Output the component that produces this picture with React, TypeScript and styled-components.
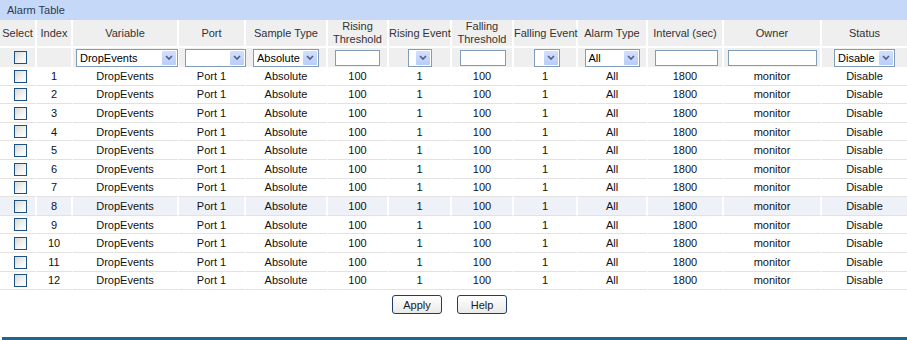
import React from 'react';
import styled, { createGlobalStyle } from 'styled-components';

const GlobalStyle = createGlobalStyle`
  body {
    margin: 0;
    background: #fff;
    font-family: 'Liberation Sans', Arial, sans-serif;
    font-size: 11px;
  }
`;

const Page = styled.div`
  width: 907px;
  height: 340px;
  display: flex;
  flex-direction: column;
`;

const TitleBar = styled.div`
  height: 20px;
  line-height: 20px;
  padding-left: 7px;
  background: #c6d8f8;
  color: #2d3b52;
  font-size: 11px;
`;

const Table = styled.table`
  width: 907px;
  table-layout: fixed;
  border-collapse: separate;
  border-spacing: 0;
`;

const HeadCell = styled.th`
  background: #efefef;
  color: #333;
  font-weight: normal;
  font-size: 11px;
  line-height: 13px;
  height: 25px;
  padding: 0;
  white-space: nowrap;
  border-right: 2px solid #fff;
  border-bottom: 2px solid #fff;
  &:last-child {
    border-right: none;
  }
`;

const FilterCell = styled.td<{ $pad?: number }>`
  background: #efefef;
  height: 19px;
  padding: 0 0 0 ${p => p.$pad || 0}px;
  text-align: center;
  vertical-align: middle;
  border-right: 2px solid #fff;
  &:last-child {
    border-right: none;
  }
`;

const Row = styled.tr<{ $hover?: boolean }>`
  background: ${p => (p.$hover ? '#eff1f9' : '#fff')};
`;

const Cell = styled.td<{ $pad?: number }>`
  height: 17.6px;
  padding: 0 0 0 ${p => p.$pad || 0}px;
  text-align: center;
  vertical-align: middle;
  color: #111;
  border-right: 2px solid #fff;
  border-bottom: 1px solid #e2e2e2;
  &:last-child {
    border-right: none;
  }
`;

const Check = styled.span`
  display: inline-block;
  width: 13px;
  height: 13px;
  box-sizing: border-box;
  border: 1px solid #1c5180;
  background: linear-gradient(135deg, #d8d8d4 0%, #f4f4f2 60%, #ffffff 100%);
  vertical-align: middle;
`;

const SelectBox = styled.div<{ $w: number }>`
  display: inline-flex;
  align-items: center;
  width: ${p => p.$w}px;
  height: 18px;
  box-sizing: border-box;
  border: 1px solid #7f9db9;
  background: #fff;
  vertical-align: middle;
  text-align: left;
`;

const SelectText = styled.span`
  flex: 1;
  padding-left: 3px;
  overflow: hidden;
  white-space: nowrap;
  color: #000;
`;

const ArrowBox = styled.span`
  width: 14px;
  height: 14px;
  margin-right: 1px;
  border-radius: 1px;
  background: linear-gradient(#d3dffd, #b9cdf9);
  display: flex;
  align-items: center;
  justify-content: center;
`;

const TextBox = styled.div<{ $w: number }>`
  display: inline-block;
  width: ${p => p.$w}px;
  height: 16px;
  box-sizing: border-box;
  border: 1px solid #7f9db9;
  background: #fff;
  vertical-align: middle;
`;

const ButtonRow = styled.div`
  display: flex;
  justify-content: center;
  gap: 15px;
  margin-top: 5px;
  padding-right: 8px;
`;

const Button = styled.button`
  width: 50px;
  height: 19px;
  padding: 0;
  border: 1px solid #1d3d6a;
  border-radius: 3px;
  background: linear-gradient(#ffffff, #e9e9e6);
  font-family: 'Liberation Sans', Arial, sans-serif;
  font-size: 11px;
  color: #1a1a2a;
`;

const BottomBar = styled.div`
  margin-top: auto;
  margin-left: 2px;
  height: 3px;
  background: #23648f;
`;

const widths = [37, 36, 106, 67, 82, 61, 63, 62, 64, 70, 76, 98, 85];

const Select: React.FC<{ w: number; value?: string }> = ({ w, value }) => (
  <SelectBox $w={w}>
    <SelectText>{value}</SelectText>
    <ArrowBox>
      <svg width="8" height="5" viewBox="0 0 8 5">
        <path d="M1 1 L4 4 L7 1" stroke="#4a5d84" strokeWidth="1.6" fill="none" />
      </svg>
    </ArrowBox>
  </SelectBox>
);

const rows = Array.from({ length: 12 }, (_, i) => i + 1);

const App: React.FC = () => (
  <Page>
    <GlobalStyle />
    <TitleBar>Alarm Table</TitleBar>
    <Table>
      <colgroup>
        {widths.map((w, i) => (
          <col key={i} style={{ width: w }} />
        ))}
      </colgroup>
      <thead>
        <tr>
          <HeadCell>Select</HeadCell>
          <HeadCell>Index</HeadCell>
          <HeadCell>Variable</HeadCell>
          <HeadCell>Port</HeadCell>
          <HeadCell>Sample Type</HeadCell>
          <HeadCell>
            Rising
            <br />
            Threshold
          </HeadCell>
          <HeadCell>Rising Event</HeadCell>
          <HeadCell>
            Falling
            <br />
            Threshold
          </HeadCell>
          <HeadCell>Falling Event</HeadCell>
          <HeadCell>Alarm Type</HeadCell>
          <HeadCell>Interval (sec)</HeadCell>
          <HeadCell>Owner</HeadCell>
          <HeadCell>Status</HeadCell>
        </tr>
        <tr>
          <FilterCell $pad={5}>
            <Check />
          </FilterCell>
          <FilterCell />
          <FilterCell $pad={3}>
            <Select w={102} value="DropEvents" />
          </FilterCell>
          <FilterCell $pad={6}>
            <Select w={61} />
          </FilterCell>
          <FilterCell>
            <Select w={66} value="Absolute" />
          </FilterCell>
          <FilterCell>
            <TextBox $w={45} />
          </FilterCell>
          <FilterCell>
            <Select w={24} />
          </FilterCell>
          <FilterCell $pad={2}>
            <TextBox $w={46} />
          </FilterCell>
          <FilterCell $pad={4}>
            <Select w={26} />
          </FilterCell>
          <FilterCell>
            <Select w={55} value="All" />
          </FilterCell>
          <FilterCell $pad={3}>
            <TextBox $w={63} />
          </FilterCell>
          <FilterCell>
            <TextBox $w={89} />
          </FilterCell>
          <FilterCell>
            <Select w={61} value="Disable" />
          </FilterCell>
        </tr>
      </thead>
      <tbody>
        {rows.map(n => (
          <Row key={n} $hover={n === 8}>
            <Cell $pad={5}>
              <Check />
            </Cell>
            <Cell>{n}</Cell>
            <Cell>DropEvents</Cell>
            <Cell>Port 1</Cell>
            <Cell>Absolute</Cell>
            <Cell>100</Cell>
            <Cell>1</Cell>
            <Cell>100</Cell>
            <Cell>1</Cell>
            <Cell>All</Cell>
            <Cell>1800</Cell>
            <Cell>monitor</Cell>
            <Cell>Disable</Cell>
          </Row>
        ))}
      </tbody>
    </Table>
    <ButtonRow>
      <Button>Apply</Button>
      <Button>Help</Button>
    </ButtonRow>
    <BottomBar />
  </Page>
);

export default App;
